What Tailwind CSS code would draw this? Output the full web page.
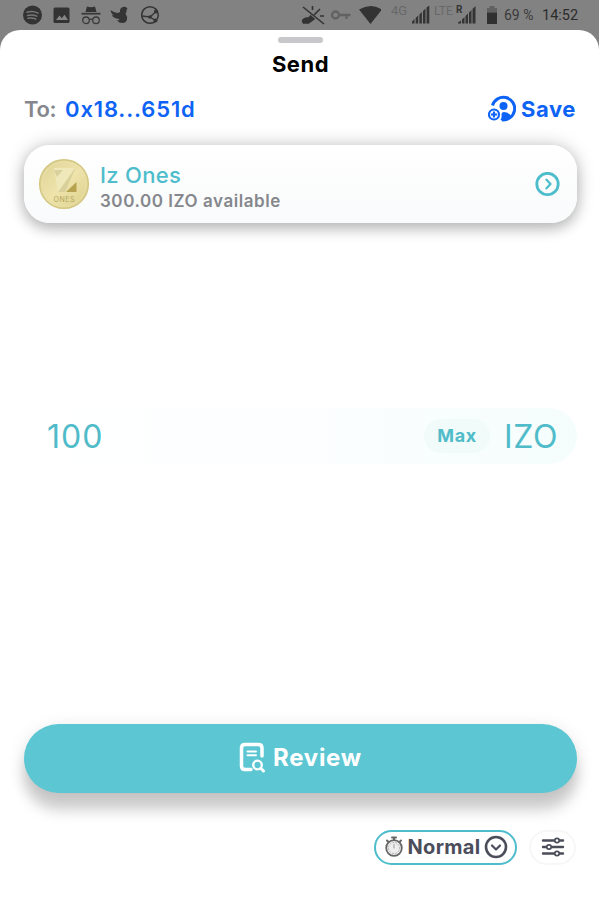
<!DOCTYPE html>
<html lang="en">
    <head>
        <meta charset="UTF-8">
        <meta name="viewport" content="width=device-width, initial-scale=1.0">
        <script src="https://cdn.jsdelivr.net/npm/@tailwindcss/browser@4"></script>
        <title>Send</title>
    </head>
    <body class="h-[900px] w-[599px] flex flex-col overflow-hidden bg-[#828282] font-['Inter',sans-serif]">
        <!-- status bar -->
        <div class="h-[30px] shrink-0 flex justify-between pl-[22px] pr-[19px] font-['Roboto',sans-serif] text-[#3a3a3a]">
            <div class="flex items-center gap-[9px]">
                <svg class="size-5" viewBox="0 0 20 20" fill="none" stroke="#777" stroke-width="1.5" stroke-linecap="round">
                    <circle cx="10.5" cy="10" r="9.5" fill="#333" stroke="none"/>
                    <path d="M5 7.2q6-1.7 11 .9M5.5 10.4q5-1.3 9.3.8M6 13.3q4-1 7.8.8"/>
                </svg>
                <svg class="size-5" viewBox="0 0 20 20">
                    <rect x="2.500" y="2.5" width="16" height="15.5" rx="1.500" fill="#333"/>
                    <path d="M5 15l3.5-4.500 2.300 2.700 2.700-3.500 3.500 5.300z" fill="#858585"/>
                </svg>
                <svg class="ml-px size-5" viewBox="0 0 20 20" fill="none" stroke="#3a3a3a" stroke-width="1.3">
                    <path d="M6 1.5q4 1.5 8 0l1.5 5.5h-11z" fill="#333" stroke="none"/>
                    <path d="M.5 8.7h19" stroke-width="1.8"/>
                    <circle cx="5" cy="15.3" r="3.3"/>
                    <circle cx="15" cy="15.3" r="3.3"/>
                    <path d="M8.3 14.8q1.7-1.2 3.4 0"/>
                </svg>
                <svg class="size-5" viewBox="0 0 20 20" fill="#343434">
                    <path d="M.5 5q4 3 7 3 1.500-.5 2.500-1-.5-4 3-5 3-.8 4.500 1.500l-1 1.500q.5 2-1 3.500 2 3 1.500 6-1 3.500-4.500 3.500-3.500 0-5.500-2.500 2 0 2.500-1.500Q2.500 13 2 10l1.500.3Q.8 8.500.5 5z"/>
                </svg>
                <svg class="ml-[2px] size-5" viewBox="0 0 20 20" fill="none" stroke="#343434" stroke-width="1.5">
                    <circle cx="9" cy="10" r="8.300"/>
                    <path d="M1 11l8 1 6-5.500M9 12l5.500 3.500" stroke-width="1.300"/>
                    <circle cx="9" cy="12" r="1.700" fill="#343434" stroke="none"/>
                    <circle cx="15" cy="6.500" r="2" fill="#343434" stroke="none"/>
                    <circle cx="14.500" cy="15.500" r="2" fill="#343434" stroke="none"/>
                </svg>
            </div>
            <div class="flex">
                <svg class="w-[80px] h-[30px]" viewBox="0 0 80 30" fill="none">
                    <g stroke="#333" stroke-width="1.600">
                        <path d="M2 7l21 17"/>
                        <path d="M19 9l-6 6M11.500 6v4M23 16h-4"/>
                        <path d="M1.500 21q1-3 5-3 2 0 3-2l3.500 3-5.500 4H2.500z" fill="#333"/>
                    </g>
                    <g stroke="#626262" stroke-width="2.300">
                        <circle cx="34.500" cy="15" r="3.500"/>
                        <path d="M38 15h11.500M45.500 15v4"/>
                    </g>
                    <path d="M58 9.500q12-7 23 0L69.500 24z" fill="#333"/>
                </svg>
                <span class="w-[20px] ml-[10px] pt-[3px] text-[13px] leading-[15px] text-[#686868]">4G</span>
                <svg class="w-[20px] h-[30px]" viewBox="0 0 20 30" fill="#343434">
                    <path d="M1 23.500v-2l2.500-2.500v4.500zM4.700 23.500v-5.500l2.500-2.500v8zM8.400 23.500v-9l2.500-2.500v11.500zM12 23.500v-12.500l2.500-2.500v15zM15.600 23.500v-16l2.700-2v18z"/>
                </svg>
                <span class="w-[22px] ml-[3px] pt-[4px] text-[12px] leading-[14px] text-[#686868]">LTE</span>
                <span class="w-[7px] pt-[4px] text-[10px] leading-[11px] font-bold text-[#343434]">R</span>
                <svg class="w-[20px] h-[30px] -ml-[5px]" viewBox="0 0 20 30" fill="#343434">
                    <path d="M0 23.500v-1l3-2v3zM4 23.500v-4l2.500-2.500v6.500zM7.500 23.500v-7.500l2.500-2.500v10zM11 23.500v-11l2.500-2.500v13.500zM14.500 23.500v-14.500l3-3v17.500z"/>
                </svg>
                <svg class="w-[12px] h-[30px] ml-[8px]" viewBox="0 0 12 30" fill="#303030">
                    <path d="M1 12.500V8h2.500V6h5v2H11v4.500z" fill="#616161"/>
                    <path d="M1 12.500h10V24H1z"/>
                </svg>
                <span class="w-[33px] ml-[6px] text-[14px] leading-[31px] whitespace-nowrap">69 %</span>
                <span class="w-[38px] ml-[5px] text-[14.5px] leading-[31px] text-[#2c2c2c]">14:52</span>
            </div>
        </div>

        <!-- bottom sheet -->
        <div class="flex-1 flex flex-col rounded-t-[20px] bg-white pl-6 pr-[22px]">
            <div class="mt-[7px] mx-auto h-[6px] w-[45px] rounded-full bg-[#c8c8ca]"></div>
            <h1 class="mt-[7px] h-7 leading-7 text-center text-[22px] tracking-[0.5px] font-bold text-black">Send</h1>

            <div class="mt-[17px] h-7 flex items-center justify-between pr-px">
                <p class="text-[22px] leading-7 font-semibold text-[#0d63f5] whitespace-nowrap"><span class="mr-[9px] -tracking-[0.4px] text-[#85878c]">To:</span><span class="tracking-[0.85px]">0x18...651d</span></p>
                <div class="flex items-center gap-[5px] text-[#0d63f5]">
                    <svg class="w-[29px] h-7" viewBox="0 0 29 28" fill="none" stroke="currentColor">
                        <path d="M5.500 10.500A11.300 11.300 0 1 1 15 24.800" stroke-width="3"/>
                        <circle cx="16.500" cy="11" r="4" fill="currentColor" stroke="none"/>
                        <path d="M13.500 25q1.500-2.500 1-5.500 0-2.500 2.500-2.500 5 .5 7 4-4 6-10.500 4z" fill="currentColor" stroke="none"/>
                        <circle cx="7" cy="19.500" r="5" stroke-width="2.200"/>
                        <path d="M7 16.500v6M4 19.500h6" stroke-width="2.200"/>
                    </svg>
                    <span class="text-[22px] leading-7 font-bold tracking-[0.6px]">Save</span>
                </div>
            </div>

            <div class="mt-[22px] h-[78px] flex items-center rounded-[26px] bg-linear-to-b from-white to-[#f9fafb] pl-[14px] pr-[17px] shadow-[0_0_18px_rgba(0,0,0,0.22),0_7px_13px_rgba(0,0,0,0.17)]">
                <svg class="size-[52px]" viewBox="0 0 52 52">
                    <defs>
                        <linearGradient id="gold" x1="0" y1="0" x2="1" y2="1">
                            <stop offset="0" stop-color="#ddd193"/>
                            <stop offset=".5" stop-color="#eee4ac"/>
                            <stop offset="1" stop-color="#dccf88"/>
                        </linearGradient>
                    </defs>
                    <circle cx="26" cy="26" r="24.300" fill="url(#gold)" stroke="#d3c681" stroke-width="1.500"/>
                    <circle cx="26" cy="26" r="22" fill="none" stroke="#eae0a8"/>
                    <path d="M16 10h21L20 34z" fill="#efe8bb"/>
                    <path d="M16 12h9l-6 7zM38 9L20 34h7z" fill="#dad09b"/>
                    <path d="M38.500 24v10H28z" fill="#b7a250"/>
                    <text x="26" y="43.500" text-anchor="middle" font-size="7" textLength="21" fill="#b6a55f">ONES</text>
                </svg>
                <div class="ml-[10px] flex-1 pt-[7px]">
                    <p class="h-[27px] leading-[27px] text-[22px] tracking-[0.3px] font-medium text-[#4dbdcc]">Iz Ones</p>
                    <p class="h-6 leading-6 text-[17px] tracking-[0.55px] font-semibold text-[#85878c]">300.00 IZO available</p>
                </div>
                <svg class="size-[25px]" viewBox="0 0 25 25" fill="none" stroke="#4dbdcc" stroke-linecap="round" stroke-linejoin="round">
                    <circle cx="12.500" cy="12" r="10.700" stroke-width="2.800"/>
                    <path d="M11.500 7.800l4 4.200-4 4.300" stroke-width="2.300"/>
                </svg>
            </div>

            <div class="mt-[185px] h-[56px] flex items-center rounded-full bg-linear-to-r from-white via-[#fcfeff] to-[#f5fdfc] pl-[23px] pr-[19px] text-[#50bbc9]">
                <span class="flex-1 pt-px text-[32px] tracking-[1px]">100</span>
                <span class="h-[34px] w-[66px] mr-[14px] rounded-full bg-[#f0fbfa] text-center leading-[33px] text-[18px] tracking-[0.6px] font-bold">Max</span>
                <span class="pt-px text-[32px] tracking-[0.6px]">IZO</span>
            </div>

            <button class="mt-[260px] h-[69px] flex items-center justify-center gap-[7px] rounded-full bg-[#5dc6d3] pb-[2px] text-white shadow-[0_18px_14px_rgba(0,0,0,0.17),0_4px_18px_rgba(0,0,0,0.12)]">
                <svg class="w-[27px] h-[31px]" viewBox="0 0 27 31" fill="none" stroke="#fff" stroke-linecap="round">
                    <path d="M23 14V6q0-3.500-3.500-3.500H6Q2.500 2.500 2.500 6v18q0 3.500 3.500 3.500h6" stroke-width="3.500"/>
                    <path d="M8.500 9.500h8.500M8.500 13.300h8.500" stroke-width="2"/>
                    <circle cx="18.500" cy="23" r="4.300" stroke-width="2.300"/>
                    <path d="M22 26.500l2.500 2.500" stroke-width="3"/>
                </svg>
                <span class="text-[24px] leading-8 tracking-[0.7px] font-bold">Review</span>
            </button>

            <div class="mt-[37px] h-[35px] flex justify-end gap-[12px] pr-px text-[#4b4d5a]">
                <div class="w-[143px] flex items-center justify-between rounded-full border-2 border-[#4dbdcc] pl-[8px] pr-[7px] pb-px">
                    <svg class="w-[20px] h-[24px]" viewBox="0 0 20 24" fill="none" stroke="#666" stroke-linecap="round">
                        <circle cx="10" cy="13" r="7.800" fill="#eee" stroke-width="1.800"/>
                        <circle cx="10" cy="13" r="5.500" stroke="#aaa" stroke-dasharray="1 2"/>
                        <path d="M8 2.500h4M10 2.500V5M3 5.500l1.500 1.500M17 5.500L15.500 7" stroke-width="2"/>
                        <path d="M10 13V9.500" stroke="#999"/>
                    </svg>
                    <span class="text-[20px] leading-7 tracking-[0.3px] font-bold">Normal</span>
                    <svg class="size-[24px]" viewBox="0 0 24 24" fill="none" stroke="currentColor" stroke-linecap="round" stroke-linejoin="round">
                        <circle cx="12" cy="12" r="10" stroke-width="2.600"/>
                        <path d="M8 10.500l4 4 4-4" stroke-width="2.200"/>
                    </svg>
                </div>
                <div class="w-[47px] flex items-center justify-center rounded-full border-2 border-[#f7f7f8] pb-px">
                    <svg class="w-[24px] h-[22px]" viewBox="0 0 24 22" fill="#fff" stroke="currentColor" stroke-width="2.400" stroke-linecap="round">
                        <path d="M2 4.500h20M2 11h20M2 17.500h20"/>
                        <circle cx="16" cy="4.500" r="2.200" stroke-width="1.700"/>
                        <circle cx="8" cy="11" r="2.200" stroke-width="1.700"/>
                        <circle cx="16" cy="17.500" r="2.200" stroke-width="1.700"/>
                    </svg>
                </div>
            </div>
        </div>
    </body>
</html>
